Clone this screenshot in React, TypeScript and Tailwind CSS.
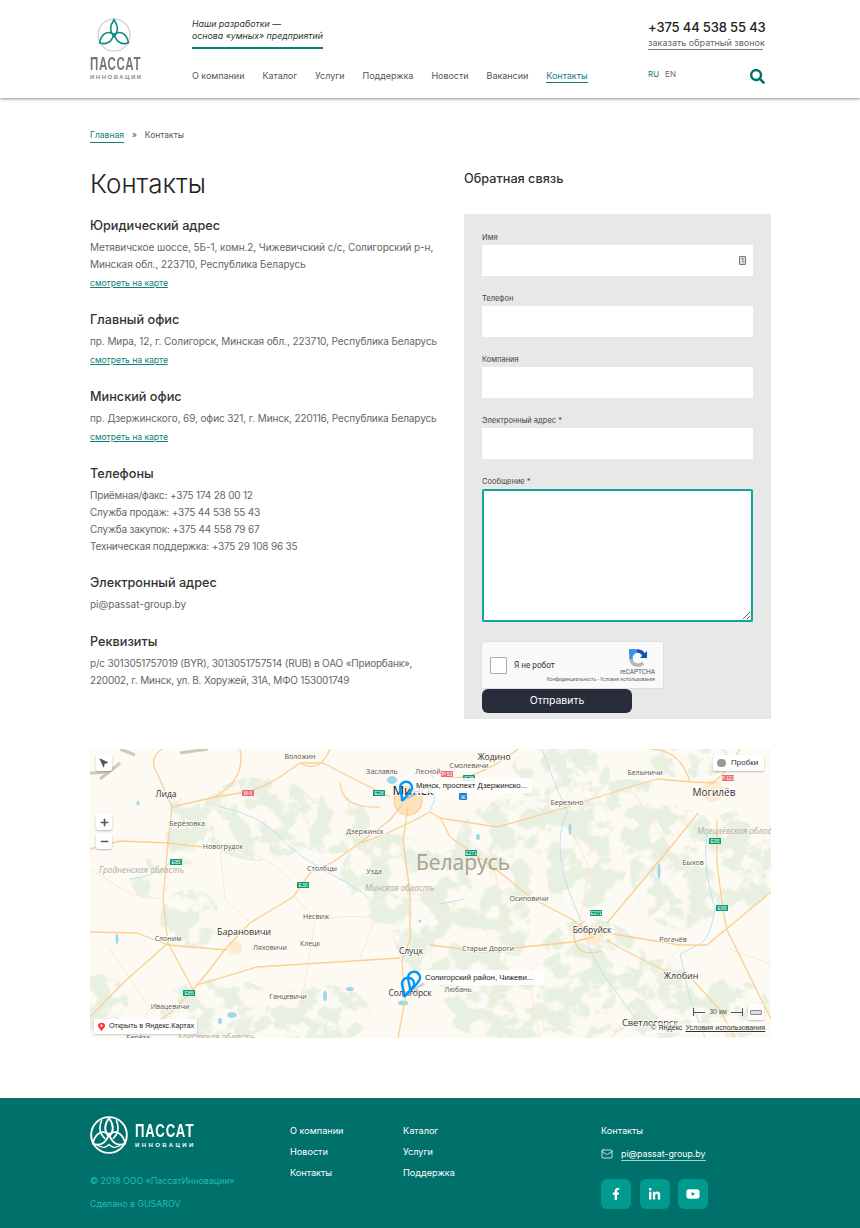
import { Mail, Minus, Navigation, Plus } from "lucide-react";
import { FaFacebookF, FaLinkedinIn, FaSearch, FaYoutube } from "react-icons/fa";

const nav = ["О компании", "Каталог", "Услуги", "Поддержка", "Новости", "Вакансии"];

const roads = [
  "M67 24 L82 58 L125 48 L157 43 Q180 36 197 23 L210 14 L233 14 L270 33 L300 48",
  "M312 56 L300 71 L270 94 L243 113 L220 124 L203 148 L160 174 L137 198 L117 224 L103 241 L80 264 L50 284",
  "M107 236 L167 218 L310 209",
  "M318 58 L313 91 L320 144 L320 191 L312 211 L315 251 L308 289",
  "M67 24 Q58 10 72 0 M82 58 L78 94 L73 151 L78 194 L98 231 L103 241",
  "M0 183 L47 184 L78 196 L137 201",
  "M0 268 L33 234 L78 194",
  "M340 63 L350 69 L407 78 L440 69 L477 58 L540 38 L567 30 L603 33 L623 34",
  "M350 68 L360 88 L407 121 L440 148 L483 171 L503 188",
  "M608 64 L570 111 L517 174",
  "M517 184 L590 196 L617 196 L681 143",
  "M627 71 L627 114 L633 161 L637 181 L673 254 L681 270",
  "M517 191 L530 199 L573 221 L603 231 L630 261 L645 289",
  "M340 196 L397 203 L423 199 L483 193 L503 188",
  "M320 40 Q345 30 375 28 Q400 22 428 0",
  "M270 94 Q300 85 340 63",
  "M250 34 Q252 60 290 58",
  "M150 0 Q156 30 125 48",
  "M210 14 Q230 25 240 0",
  "M600 33 Q590 0 560 0",
  "M623 34 Q640 20 650 0",
  "M0 100 L30 92 L78 94 L130 100",
];

const minorRoads = [
  "M130 98 Q170 100 200 130 L220 150",
  "M205 148 L225 170 L218 218 L210 260",
  "M225 170 Q270 165 285 170 L270 210",
  "M0 120 L40 145 L70 150",
  "M130 100 L135 150 L160 174",
  "M320 144 L365 155 L340 196",
  "M400 100 L420 190 L400 270",
  "M590 196 L545 270 L520 289",
  "M640 200 L681 215",
  "M470 60 L500 120 L490 170",
  "M437 220 L450 289",
  "M540 38 L580 100",
  "M20 200 L60 260 L40 289",
];

// large soft regions; the filter cuts them into forest patches
const greens = [
  [170, 70, 60, 42], [240, 75, 40, 30], [300, 130, 50, 45], [370, 170, 70, 70], [420, 100, 55, 50],
  [490, 100, 50, 60], [540, 70, 50, 40], [590, 120, 50, 60], [650, 110, 40, 50], [500, 230, 60, 60],
  [420, 260, 70, 30], [570, 250, 40, 40], [640, 260, 40, 30], [130, 260, 60, 30], [230, 265, 50, 30],
  [95, 80, 20, 36], [100, 170, 30, 30], [12, 255, 26, 30], [60, 130, 20, 20], [470, 25, 50, 30],
  [600, 10, 40, 20],
];

const rivers = [
  "M130 58 Q170 66 190 88 T250 130 Q270 140 280 150",
  "M82 112 Q65 128 40 130",
  "M452 0 Q470 50 478 62 Q462 90 478 140 L490 170 Q500 210 520 235 L550 275",
  "M617 84 Q612 120 625 160 Q620 190 610 195 L590 205 L600 250 L615 289",
  "M350 155 L375 150",
  "M340 20 Q350 45 340 62",
];

const lakes = [
  [302, 31, 5, 4], [142, 266, 5, 3], [27, 190, 1.500, 5], [48, 54, 1.500, 2.500], [169, 183, 2, 3],
  [235, 247, 2, 5], [260, 240, 4, 2], [313, 254, 5, 2.500], [569, 122, 1.500, 8], [330, 172, 1.500, 1.500],
  [130, 272, 2, 3], [480, 80, 1.500, 6], [388, 88, 2, 3],
];

const cities: [string, number, number, number, string?][] = [
  ["Воложин", 210, 10, 7],
  ["Заславль", 292, 25, 7],
  ["Лесной", 338, 25, 7],
  ["Жодино", 404, 11, 8.500],
  ["Смолевичи", 379, 19, 7],
  ["Лида", 76, 48, 8.500],
  ["Минск", 323, 46, 13, "#111"],
  ["Берёзовка", 97, 77, 7],
  ["Новогрудок", 133, 100, 7],
  ["Дзержинск", 275, 85, 7],
  ["Столбцы", 232, 122, 7],
  ["Узда", 284, 125, 7],
  ["Несвиж", 226, 170, 7],
  ["Слоним", 78, 192, 7],
  ["Барановичи", 154, 186, 9],
  ["Ляховичи", 180, 201, 7],
  ["Клецк", 220, 197, 7],
  ["Слуцк", 321, 205, 8.500],
  ["Ивацевичи", 80, 260, 7],
  ["Ганцевичи", 198, 250, 7],
  ["Солигорск", 320, 247, 8.500],
  ["Берёза", 48, 291, 7],
  ["Белыничи", 555, 26, 7],
  ["Могилёв", 624, 47, 10],
  ["Березино", 477, 56, 7],
  ["Быхов", 603, 116, 7],
  ["Осиповичи", 439, 152, 7],
  ["Бобруйск", 502, 184, 8.500],
  ["Старые Дороги", 398, 202, 7],
  ["Рогачёв", 583, 193, 7],
  ["Жлобин", 591, 230, 9],
  ["Светлогорск", 560, 277, 9.300],
  ["Любань", 368, 243, 7],
];

const regions: [string, number, number][] = [
  ["Гродненская область", 9, 124],
  ["Минская область", 275, 142],
  ["Брестская область", 88, 291],
  ["Могилёвская область", 607, 85],
];

const shields: [string, number, number, string][] = [
  ["М-6", 158, 44, "#ec6a78"],
  ["Е85", 86, 113, "#0b9b74"],
  ["Е85", 99, 244, "#0b9b74"],
  ["Е30", 213, 136, "#0b9b74"],
  ["Е28", 289, 44, "#0b9b74"],
  ["Р-53", 357, 25, "#ec6a78"],
  ["Е28", 379, 29, "#0b9b74"],
  ["Е271", 381, 104, "#0b9b74"],
  ["Е271", 506, 164, "#0b9b74"],
  ["Е95", 625, 92, "#0b9b74"],
  ["Е95", 632, 159, "#0b9b74"],
  ["Р-123", 638, 29, "#ec6a78"],
];

function LogoMark({ color, ring, size, detail }: { color: string; ring: string; size: number; detail?: boolean }) {
  return (
    <svg width={size} height={size} viewBox="0 0 40 40" fill="none" className="block">
      <circle cx="20" cy="20" r="18.800" stroke={ring} strokeWidth={detail ? 2 : 1.300} />
      <path d="M20 2 C15 9 14.500 16 20 22 C25.500 16 25 9 20 2Z" stroke={color} strokeWidth="1.900" />
      <path d="M3 29 C10 32 17 29 20 19 C12 14 5 19 3 29Z" stroke={color} strokeWidth="1.900" />
      <path d="M37 29 C30 32 23 29 20 19 C28 14 35 19 37 29Z" stroke={color} strokeWidth="1.900" />
      {detail && (
        <g stroke={color} strokeWidth="1.500">
          <path d="M12.500 4 C9 12 10 19 16 24" />
          <path d="M27.500 4 C31 12 30 19 24 24" />
          <path d="M7 30 C14 35 17 33 20 30 C23 33 26 35 33 30" />
        </g>
      )}
    </svg>
  );
}

function Pin({ x, y }: { x: number; y: number }) {
  return (
    <g transform={`translate(${x} ${y})`}>
      <path d="M-3 14 L9 5 L11 8Z" fill="#777" opacity="0.35" />
      <path
        d="M-4 14 C-3 10 -6 6 -6 0 A6 6 0 1 1 6 1.500 C5 6 0 9 -4 14Z"
        fill="none"
        stroke="#0096ff"
        strokeWidth="2.400"
      />
    </g>
  );
}

function Field({ label, icon }: { label: string; icon?: boolean }) {
  return (
    <div className="mb-[15px]">
      <label className="block h-[15px] text-[7.500px] leading-[15px] text-[#444]">{label}</label>
      <div className="flex h-[31px] items-center justify-end bg-white pr-[7px]">
        {icon && (
          <span className="flex h-[9px] w-[7px] items-center justify-center rounded-[1px] border border-[#777] bg-[#ddd] text-[6px] leading-none text-[#555]">
            1
          </span>
        )}
      </div>
    </div>
  );
}

function Section({ title, children, gap = "mb-[18px]" }: { title: string; children: React.ReactNode; gap?: string }) {
  return (
    <section className={gap}>
      <h3 className="h-[20px] text-[12.700px] font-medium leading-[20px] text-[#333]">{title}</h3>
      <div className="mt-[3px] text-[10px] leading-[17px] tracking-[-0.08px] text-[#666]">{children}</div>
    </section>
  );
}

function MapLink() {
  return <a className="mt-px block h-[18px] text-[8.700px] leading-[18px] text-[#12807a] underline">смотреть на карте</a>;
}

function YandexMap() {
  return (
    <div className="relative h-[289px] w-[681px] overflow-hidden bg-[#fdfaf3]">
      <svg viewBox="0 0 681 289" width="681" height="289" className="block">
        <defs>
          <filter id="forest" x="0" y="0" width="100%" height="100%" colorInterpolationFilters="sRGB">
            <feTurbulence type="fractalNoise" baseFrequency="0.05" numOctaves="4" seed="5" />
            <feColorMatrix
              type="matrix"
              values="0 0 0 0 0.91  0 0 0 0 0.94  0 0 0 0 0.885  9 0 0 0 -3.900"
              result="patches"
            />
            <feComposite in="patches" in2="SourceAlpha" operator="in" />
          </filter>
        </defs>
        <g fill="#000" filter="url(#forest)">
          {greens.map(([cx, cy, rx, ry], i) => (
            <ellipse key={i} cx={cx} cy={cy} rx={rx} ry={ry} />
          ))}
        </g>
        <path d="M0 24 Q20 25 30 14 L10 30 M30 0 L45 6 M90 4 L118 0" stroke="#cfc8ba" strokeWidth="3" fill="none" />
        <g fill="none" stroke="#fde8cc" strokeWidth="1">
          {minorRoads.map((d, i) => (
            <path key={i} d={d} />
          ))}
        </g>
        <g fill="none" stroke="#b9dff0" strokeWidth="0.900">
          {rivers.map((d, i) => (
            <path key={i} d={d} />
          ))}
        </g>
        <g fill="#9ed6ee">
          {lakes.map(([cx, cy, rx, ry], i) => (
            <ellipse key={i} cx={cx} cy={cy} rx={rx} ry={ry} />
          ))}
        </g>
        <circle cx="318" cy="52" r="14" fill="#fbe3bf" />
        <circle cx="623" cy="42" r="11" fill="#fdeccf" />
        <circle cx="503" cy="186" r="10" fill="#fdeccf" />
        <circle cx="145" cy="199" r="7" fill="#fdeccf" />
        <g fill="none" stroke="#fbcf92" strokeWidth="1.300" strokeLinejoin="round">
          {roads.map((d, i) => (
            <path key={i} d={d} />
          ))}
          <circle cx="318" cy="52" r="14" />
          <path d="M495 172 Q480 180 486 195 Q492 208 512 202" />
        </g>
        <text x="373" y="121" textAnchor="middle" fontSize="21" fill="#a89f91" fontFamily="Open Sans, sans-serif">
          Беларусь
        </text>
        {regions.map(([name, x, y]) => (
          <text key={name} x={x} y={y} fontSize="8.300" fontStyle="italic" fill="#b3aa9d" fontFamily="Open Sans, sans-serif">
            {name}
          </text>
        ))}
        {cities.map(([name, x, y, size, color]) => (
          <text
            key={name}
            x={x}
            y={y}
            textAnchor="middle"
            fontSize={size}
            fill={color ?? (size > 8 ? "#333" : "#555")}
            stroke="#fdfaf3"
            strokeWidth="2"
            paintOrder="stroke"
            fontFamily="Open Sans, sans-serif"
          >
            {name}
          </text>
        ))}
        {shields.map(([name, x, y, color]) => (
          <g key={`${name}${x}`}>
            <rect x={x - 6} y={y - 3} width="12" height="6" rx="0.500" fill={color} />
            <text x={x} y={y + 2} textAnchor="middle" fontSize="5" fill="#fff" fontFamily="Liberation Sans, sans-serif">
              {name}
            </text>
          </g>
        ))}
        <rect x="369" y="44" width="8" height="7" rx="1" fill="#1a7fd0" />
        <text x="373" y="50" textAnchor="middle" fontSize="6" fill="#fff" fontFamily="Liberation Sans, sans-serif">
          Ж
        </text>
      </svg>

      <div className="absolute left-[320px] top-[29px] flex h-[15px] w-[122px] items-center whitespace-nowrap rounded-[2px] bg-white/85 pl-[6px] text-[7.800px] text-[#222] [font-family:'Liberation_Sans',sans-serif]">
        Минск, проспект Дзержинско...
      </div>
      <div className="absolute left-[329px] top-[221px] flex h-[15px] w-[124px] items-center whitespace-nowrap rounded-[2px] bg-white/85 pl-[6px] text-[7.800px] text-[#222] [font-family:'Liberation_Sans',sans-serif]">
        Солигорский район, Чижеви...
      </div>
      <svg viewBox="0 0 681 289" width="681" height="289" className="absolute inset-0">
        <Pin x={316} y={38} />
        <Pin x={318} y={234} />
        <Pin x={324} y={228} />
      </svg>

      <div className="absolute left-[6px] top-[6px] flex h-[16px] w-[16px] items-center justify-center rounded-[2px] bg-white shadow-[0_1px_2px_rgba(0,0,0,.25)]">
        <Navigation size={10} fill="#555" stroke="#555" className="-rotate-90" />
      </div>
      <div className="absolute left-[6px] top-[65px] flex h-[16px] w-[16px] items-center justify-center rounded-[2px] bg-white shadow-[0_1px_2px_rgba(0,0,0,.25)]">
        <Plus size={11} strokeWidth={3.500} className="text-[#555]" />
      </div>
      <div className="absolute left-[6px] top-[84px] flex h-[16px] w-[16px] items-center justify-center rounded-[2px] bg-white shadow-[0_1px_2px_rgba(0,0,0,.25)]">
        <Minus size={11} strokeWidth={3.500} className="text-[#555]" />
      </div>
      <div className="absolute left-[623px] top-[6px] flex h-[16px] w-[51px] items-center gap-[5px] rounded-[2px] bg-white pl-[4px] text-[8px] text-[#333] shadow-[0_1px_2px_rgba(0,0,0,.25)] [font-family:'Liberation_Sans',sans-serif]">
        <span className="h-[8px] w-[9px] rounded-full bg-[#999]" />
        Пробки
      </div>
      <div className="absolute left-[4px] top-[270px] flex h-[15px] w-[103px] items-center gap-[4px] whitespace-nowrap rounded-[2px] bg-white pl-[4px] text-[7.200px] text-[#222] shadow-[0_1px_2px_rgba(0,0,0,.2)] [font-family:'Liberation_Sans',sans-serif]">
        <svg width="7" height="10" viewBox="0 0 8 10">
          <path d="M4 10 C3 7 0 6 0 3.500 A4 3.500 0 1 1 8 3.500 C8 6 5 7 4 10Z" fill="#f33" />
          <circle cx="4" cy="3.500" r="1.300" fill="#fff" />
        </svg>
        Открыть в Яндекс.Картах
      </div>
      <div className="absolute left-[603px] top-[259px] flex h-[8px] w-[50px] items-center justify-between whitespace-nowrap border-x border-[#555] text-[7px] text-[#555] [font-family:'Liberation_Sans',sans-serif]">
        <span className="h-px w-[11px] bg-[#555]" />
        30 км
        <span className="h-px w-[11px] bg-[#555]" />
      </div>
      <div className="absolute left-[658px] top-[255px] flex h-[16px] w-[16px] items-center justify-center rounded-[2px] bg-white shadow-[0_1px_2px_rgba(0,0,0,.25)]">
        <span className="h-[5px] w-[12px] rounded-[1px] border border-[#888] bg-[#ddd]" />
      </div>
      <div className="absolute left-[561px] top-[274px] flex gap-[3px] whitespace-nowrap bg-white/60 text-[7.200px] leading-[10px] text-[#333] [font-family:'Liberation_Sans',sans-serif]">
        <span>© Яндекс</span>
        <span className="underline">Условия использования</span>
      </div>
    </div>
  );
}

export default function App() {
  return (
    <div className="w-[860px] bg-white [font-family:Inter,sans-serif]">
      <header className="h-[98px] shadow-[0_1px_3px_rgba(0,0,0,.45)]">
        <div className="ml-[90px] flex w-[681px]">
          <div className="w-[102px] pt-[18px]">
            <div className="ml-[7px]">
              <LogoMark color="#0e8a80" ring="#c9c9c9" size={34} />
            </div>
            <div className="mt-[4px] origin-left scale-x-[0.64] whitespace-nowrap text-[18px] font-bold leading-[17px] tracking-[1px] text-[#777] [font-family:'Liberation_Sans',sans-serif]">
              ПАССАТ
            </div>
            <div className="whitespace-nowrap text-[6px] font-bold leading-[9px] tracking-[1.500px] text-[#888] [font-family:'Liberation_Sans',sans-serif]">
              ИННОВАЦИИ
            </div>
          </div>
          <div className="w-[456px]">
            <div className="mt-[18px] w-[131px] whitespace-nowrap border-b-2 border-[#00857c] pb-[5px] text-[8.800px] italic leading-[12px] text-[#333]">
              Наши разработки —<br />
              основа «умных» предприятий
            </div>
            <nav className="mt-[20px] flex gap-[18px] text-[9px] leading-[13px] tracking-[-0.03px] text-[#555]">
              {nav.map((item) => (
                <a key={item}>{item}</a>
              ))}
              <a className="border-b border-[#12807a] text-[#12807a]">Контакты</a>
            </nav>
          </div>
          <div className="w-[123px]">
            <div className="mt-[18px] whitespace-nowrap text-[13px] font-medium leading-[18px] tracking-[-0.15px] text-[#222]">+375 44 538 55 43</div>
            <div className="mt-px w-[115px] whitespace-nowrap border-b border-[#777] text-[9px] leading-[12px] text-[#666]">
              заказать обратный звонок
            </div>
            <div className="mt-[18px] flex items-start justify-between pr-[6px]">
              <span className="flex gap-[6px] text-[8px] leading-[12px]">
                <a className="text-[#12807a]">RU</a>
                <a className="text-[#666]">EN</a>
              </span>
              <FaSearch size={15} className="mt-[1px] text-[#00706b]" />
            </div>
          </div>
        </div>
      </header>

      <main className="ml-[90px] w-[681px] pt-[30px]">
        <div className="flex">
          <div className="w-[374px]">
            <div className="flex h-[16px] items-start gap-[8px] text-[8.500px] leading-[14px] text-[#555]">
              <a className="border-b border-[#12807a] text-[#12807a]">Главная</a>
              <span>»</span>
              <span>Контакты</span>
            </div>
            <h1 className="mb-[14px] mt-[22px] h-[36px] text-[26px] font-light leading-[36px] text-[#222]">Контакты</h1>
            <Section title="Юридический адрес">
              <p>
                Метявичское шоссе, 5Б-1, комн.2, Чижевичский с/с, Солигорский р-н,
                <br />
                Минская обл., 223710, Республика Беларусь
              </p>
              <MapLink />
            </Section>
            <Section title="Главный офис">
              <p>пр. Мира, 12, г. Солигорск, Минская обл., 223710, Республика Беларусь</p>
              <MapLink />
            </Section>
            <Section title="Минский офис">
              <p className="tracking-[-0.12px]">пр. Дзержинского, 69, офис 321, г. Минск, 220116, Республика Беларусь</p>
              <MapLink />
            </Section>
            <Section title="Телефоны">
              <div className="tracking-[-0.2px]">
                <p>Приёмная/факс: +375 174 28 00 12</p>
                <p>Служба продаж: +375 44 538 55 43</p>
                <p>Служба закупок: +375 44 558 79 67</p>
                <p>Техническая поддержка: +375 29 108 96 35</p>
              </div>
            </Section>
            <Section title="Электронный адрес" gap="mb-[19px]">
              <p className="tracking-normal">pi@passat-group.by</p>
            </Section>
            <Section title="Реквизиты">
              <p className="tracking-[-0.2px]">
                р/с 3013051757019 (BYR), 3013051757514 (RUB) в ОАО «Приорбанк»,
                <br />
                220002, г. Минск, ул. В. Хоружей, 31А, МФО 153001749
              </p>
            </Section>
          </div>

          <div className="w-[307px]">
            <h2 className="mt-[41px] h-[20px] text-[12.700px] font-medium leading-[20px] text-[#333]">Обратная связь</h2>
            <form className="mt-[25px] h-[505px] bg-[#e8e8e8] px-[18px] pt-[16px]">
              <Field label="Имя" icon />
              <Field label="Телефон" />
              <Field label="Компания" />
              <Field label="Электронный адрес *" />
              <label className="block h-[15px] text-[7.500px] leading-[15px] text-[#444]">Сообщение *</label>
              <textarea className="block h-[133px] w-[271px] rounded-[2px] border-2 border-[#10a59b] bg-white outline-none" />
              <div className="mt-[20px] flex h-[46px] w-[181px] items-center justify-between rounded-[2px] bg-[#f9f9f9] pl-[8px] pr-[8px] shadow-[0_0_2px_rgba(0,0,0,.15)] [font-family:'Roboto',sans-serif]">
                <span className="flex items-center gap-[7px] whitespace-nowrap text-[8.200px] text-[#333]">
                  <span className="h-[17px] w-[17px] rounded-[1px] border border-[#aaa] bg-white" />Я не робот
                </span>
                <span className="flex h-full w-[60px] flex-col items-end pt-[6px]">
                  <svg width="20" height="20" viewBox="0 0 20 20" fill="none" strokeWidth="3.600" className="mr-[7px]">
                    <path d="M3 10 A7 7 0 0 0 15 15" stroke="#b5b5b5" />
                    <path d="M3 11 A7 7 0 0 1 9 3" stroke="#3d8ff0" />
                    <path d="M9 3 A7 7 0 0 1 16 8" stroke="#1a4fb0" />
                    <path d="M19 3 L19 10 L12 10Z" fill="#1a4fb0" />
                    <path d="M1 1 L8 1 L1 8Z" fill="#3d8ff0" />
                  </svg>
                  <span className="text-[6.500px] leading-[8px] text-[#555]">reCAPTCHA</span>
                  <span className="whitespace-nowrap text-[4.800px] leading-[7px] text-[#666]">Конфиденциальность - Условия использования</span>
                </span>
              </div>
              <button type="button" className="mt-px block h-[24px] w-[150px] rounded-[6px] bg-[#292c3b] text-[10.500px] text-white">
                Отправить
              </button>
            </form>
          </div>
        </div>

        <div className="mt-[30px]">
          <YandexMap />
        </div>
      </main>

      <footer className="mt-[60px] h-[130px] bg-[#00706b]">
        <div className="ml-[90px] flex w-[681px] text-[9.150px] text-white">
          <div className="w-[200px] pt-[18px]">
            <div className="flex items-center gap-[7px]">
              <LogoMark color="#fff" ring="#fff" size={38} detail />
              <div className="[font-family:'Liberation_Sans',sans-serif]">
                <div className="origin-left scale-x-[0.73] whitespace-nowrap text-[18px] font-bold leading-[20px] tracking-[1.200px]">ПАССАТ</div>
                <div className="whitespace-nowrap text-[6px] font-bold leading-[8px] tracking-[2.400px]">ИННОВАЦИИ</div>
              </div>
            </div>
            <div className="mt-[20px] text-[8.800px] leading-[14px] text-[#22bdb0]">© 2018 ООО «ПассатИнновации»</div>
            <div className="mt-[9px] text-[8.800px] leading-[14px] text-[#22bdb0]">Сделано в GUSAROV</div>
          </div>
          <div className="flex w-[113px] flex-col gap-[7px] pt-[26px] leading-[14px]">
            <a>О компании</a>
            <a>Новости</a>
            <a>Контакты</a>
          </div>
          <div className="flex w-[198px] flex-col gap-[7px] pt-[26px] leading-[14px]">
            <a>Каталог</a>
            <a>Услуги</a>
            <a>Поддержка</a>
          </div>
          <div className="pt-[26px]">
            <div className="leading-[14px]">Контакты</div>
            <div className="mt-[9px] flex items-center gap-[8px]">
              <Mail size={12} strokeWidth={1.500} />
              <a className="border-b border-[#9fd6d2] text-[8.800px] leading-[13px]">pi@passat-group.by</a>
            </div>
            <div className="mt-[18px] flex gap-[8.500px]">
              <a className="flex h-[30px] w-[30px] items-center justify-center rounded-[6px] bg-[#009b8e]"><FaFacebookF size={12} /></a>
              <a className="flex h-[30px] w-[30px] items-center justify-center rounded-[6px] bg-[#009b8e]"><FaLinkedinIn size={13} /></a>
              <a className="flex h-[30px] w-[30px] items-center justify-center rounded-[6px] bg-[#009b8e]"><FaYoutube size={14} /></a>
            </div>
          </div>
        </div>
      </footer>
    </div>
  );
}
